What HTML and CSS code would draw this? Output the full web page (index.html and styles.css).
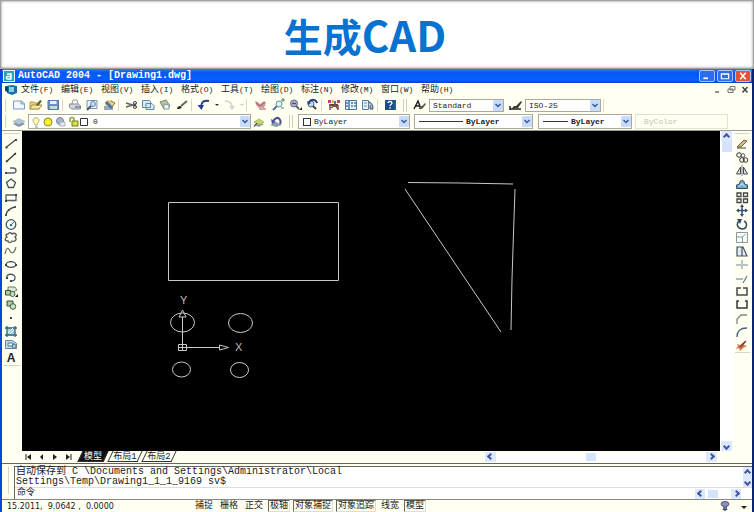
FILE: index.html
```
<!DOCTYPE html>
<html lang="zh-CN">
<head>
<meta charset="utf-8">
<title>生成CAD</title>
<link rel="stylesheet" href="styles.css">
</head>
<body>
<header class="banner"><h1>生成<span class="latin">CAD</span></h1></header>
<main class="window">
  <div class="titlebar">
    <svg class="logo" viewBox="0 0 12 12"><rect width="12" height="12" fill="#e8f6f8"/><rect x="1" y="1" width="10" height="10" fill="#2fa3b5"/><path d="M4 4h4v5H4.500C3 9 3 6.500 4.500 6.500H8" fill="none" stroke="#fff" stroke-width="1.500"/></svg>
    <span class="caption">AutoCAD 2004 - [Drawing1.dwg]</span>
    <button class="wbtn" aria-label="最小化"><svg viewBox="0 0 14 11"><path d="M3 8h5" stroke="#fff" stroke-width="2"/></svg></button>
    <button class="wbtn" aria-label="还原"><svg viewBox="0 0 14 11"><path d="M3 3h8v5.500H3zM3 3.500h8" fill="none" stroke="#fff" stroke-width="1.300"/></svg></button>
    <button class="wbtn close" aria-label="关闭"><svg viewBox="0 0 14 11"><path d="M4 2l6 7M10 2L4 9" stroke="#fff" stroke-width="1.700"/></svg></button>
  </div>

  <nav class="menubar">
    <svg class="docicon" viewBox="0 0 14 12"><path d="M2 2l6-1 5 1v7l-5 2-5-2z" fill="#1b6fa8"/><path d="M5 3h5v5H5z" fill="#7fd0e8"/><path d="M1 2l3 1v5l-3-1z" fill="#163f78"/></svg>
    <button>文件<i>(F)</i></button><button>编辑<i>(E)</i></button><button>视图<i>(V)</i></button><button>插入<i>(I)</i></button><button>格式<i>(O)</i></button><button>工具<i>(T)</i></button><button>绘图<i>(D)</i></button><button>标注<i>(N)</i></button><button>修改<i>(M)</i></button><button>窗口<i>(W)</i></button><button>帮助<i>(H)</i></button>
    <span class="spacer"></span>
    <button class="mdi" aria-label="最小化图形"><svg viewBox="0 0 14 12"><path d="M5 8h4" stroke="#555" stroke-width="1.300"/></svg></button>
    <button class="mdi" aria-label="还原图形"><svg viewBox="0 0 14 12"><path d="M6 2.500h5v3.500H6zM4 5h5v3.500H4z" fill="#fffff2" stroke="#777"/></svg></button>
    <button class="mdi" aria-label="关闭图形"><svg viewBox="0 0 14 12"><path d="M4.500 3l5 5.500M9.500 3l-5 5.500" stroke="#444" stroke-width="1.500"/></svg></button>
  </nav>

  <div class="toolbar">
    <span class="grip"></span>
    <button aria-label="新建"><svg viewBox="0 0 16 14"><path d="M2.500 3h8l3 2.500V11h-11z" fill="#f1f8ff" stroke="#7d9cc4"/><path d="M10 3v3h3.500" fill="#bad5ee" stroke="#7d9cc4"/></svg></button>
    <button aria-label="打开"><svg viewBox="0 0 16 14"><path d="M2 4h4l1 1h4v6H2z" fill="#f0cf6a" stroke="#b59a55"/><path d="M4 7h10l-3 4H2z" fill="#f9e8a0" stroke="#a98f4c"/><path d="M8 7l4-5 2 1-4 5z" fill="#596635"/></svg></button>
    <button aria-label="保存"><svg viewBox="0 0 16 14"><path d="M3 2.500h10.500v9H3z" fill="#6d90c4" stroke="#5377ad"/><path d="M5 3h6.500v3H5z" fill="#e6f1fb"/><path d="M5 8h7v3H5z" fill="#c8d8eb"/></svg></button>
    <span class="sep"></span>
    <button aria-label="打印"><svg viewBox="0 0 16 14"><path d="M5 6l1-4h4l1 4" fill="#fff" stroke="#9a9aa8"/><path d="M2.500 6h9l2 2v3h-9l-2-2z" fill="#d3d4de" stroke="#85879a"/><path d="M8 9h5" stroke="#485378"/></svg></button>
    <button aria-label="打印预览"><svg viewBox="0 0 16 14"><path d="M3 2.500h10v8H3z" fill="#edf5fd" stroke="#7893b5"/><circle cx="9" cy="6" r="2.500" fill="#c4e1f3" stroke="#6b86a9"/><path d="M7 8l-4 4" stroke="#455273" stroke-width="2"/></svg></button>
    <button aria-label="发布"><svg viewBox="0 0 16 14"><circle cx="8" cy="6" r="4" fill="#ecc878"/><path d="M3 8h9v4H3z" fill="#9ba7bb"/><path d="M6 3l6 6-2 2-6-6z" fill="#4973ad"/><path d="M10 3l4 2-3 4" fill="#eed478" stroke="#7e7547"/></svg></button>
    <span class="sep"></span>
    <button aria-label="剪切"><svg viewBox="0 0 16 14"><path d="M3 5l10 3M3 9l10-3" stroke="#666" stroke-width="1.500"/><circle cx="12" cy="5" r="1.500" fill="none" stroke="#444"/><circle cx="12" cy="9" r="1.500" fill="none" stroke="#444"/></svg></button>
    <button aria-label="复制"><svg viewBox="0 0 16 14"><path d="M2.500 2.500h7l1 1v6h-8zM6 5.500h6l2 2v4H6z" fill="#d9ebfb" stroke="#5f86b7"/></svg></button>
    <button aria-label="粘贴"><svg viewBox="0 0 16 14"><path d="M3 4l6-2 4 6-6 3z" fill="#bac5a2" stroke="#7c8872"/><path d="M7 6l5 1v4H7z" fill="#eef6fb" stroke="#8296a3"/></svg></button>
    <button aria-label="特性匹配"><svg viewBox="0 0 16 14"><path d="M3 11c0-3 3-3 3-3l2 1-2 2z" fill="#333"/><path d="M7 8l6-5" stroke="#71624a" stroke-width="2"/></svg></button>
    <span class="sep"></span>
    <button aria-label="放弃"><svg viewBox="0 0 16 14"><path d="M13 3C8 2 5 4 5 9" fill="none" stroke="#243d86" stroke-width="2"/><path d="M1.500 7L8 7l-2.500 5z" fill="#243d86"/></svg></button>
    <button class="narrow" aria-label="放弃列表"><svg viewBox="0 0 8 14"><path d="M2 6h4L4 8z" fill="#333"/></svg></button>
    <button aria-label="重做"><svg viewBox="0 0 16 14"><path d="M4 3c5 0 7 2 7 6" fill="none" stroke="#d0d0d0" stroke-width="1.500"/><path d="M8 8h6l-3 4z" fill="#d4d4d4"/></svg></button>
    <button class="narrow" aria-label="重做列表"><svg viewBox="0 0 8 14"><path d="M2 6h4L4 8z" fill="#ccc"/></svg></button>
    <span class="sep wide"></span>
    <button aria-label="平移"><svg viewBox="0 0 16 14"><path d="M2 3l3 1 2 2 4-3 2 2-2 5H6L3 7z" fill="#d49a98"/><path d="M3 5l4 3 5-4M6 11h7" stroke="#a05665" fill="none"/></svg></button>
    <button aria-label="实时缩放"><svg viewBox="0 0 16 14"><path d="M7 8l-4 4" stroke="#527291" stroke-width="2"/><circle cx="9" cy="6" r="3" fill="#ddf3f0" stroke="#5992a1"/><path d="M11 2h4M13 0v4M11 10h3" stroke="#4d8a52"/></svg></button>
    <button aria-label="窗口缩放"><svg viewBox="0 0 16 14"><circle cx="7" cy="5.500" r="3.500" fill="#a6a9bd" stroke="#676f8b"/><path d="M9 8l3 3" stroke="#596078" stroke-width="2"/><path d="M5 5.500h4" stroke="#44506d"/><path d="M12 12h3v-3z" fill="#222"/></svg></button>
    <button aria-label="缩放上一个"><svg viewBox="0 0 16 14"><circle cx="7" cy="6" r="3" fill="#bdd9f1" stroke="#4b658c"/><path d="M9 8l3 3" stroke="#444" stroke-width="2"/><path d="M13 5C12 1 7 1 5 4" fill="none" stroke="#283c80" stroke-width="2"/><path d="M3 3l1 4 3-2z" fill="#283c80"/></svg></button>
    <span class="sep"></span>
    <button aria-label="特性"><svg viewBox="0 0 16 14"><path d="M2 2h3v3H2zM11 2h3v3h-3z" fill="#c34856"/><path d="M6 2h2v3H6z" fill="#e3b442"/><path d="M8 3h2v3H8z" fill="#4378b8"/><path d="M3 6h9v2H3z" fill="#60433b"/><path d="M4 6v6M12 7v5M5 10l4-3 3 4" stroke="#795448" fill="none" stroke-width="1.500"/></svg></button>
    <button aria-label="设计中心"><svg viewBox="0 0 16 14"><path d="M2.500 2.500h11v9h-11z" fill="#e8f2fa" stroke="#47749f"/><path d="M6 3v8M8 5h2M11 5h2M8 8h2M11 8h2M3 5h2M3 8h2" stroke="#4e7ba4" stroke-width="1.500"/></svg></button>
    <button aria-label="工具选项板"><svg viewBox="0 0 16 14"><path d="M2.500 2.500h6v9h-6z" fill="#e4f0f8" stroke="#547ea4"/><path d="M4 5h3M4 8h3" stroke="#668fae"/><path d="M8 4c3 0 5 2 5 7h-3V7" fill="#9dbbd3" stroke="#3c4d65"/></svg></button>
    <span class="sep"></span>
    <button aria-label="帮助"><svg viewBox="0 0 16 14"><path d="M3 2h11v10H3z" fill="#285f96"/><path d="M3 4l2-2h9l-2 2v8H3z" fill="#1c4e83"/><path d="M6 5c0-2 4-2 4 0 0 1.500-2 1.500-2 3M8 9v1.500" fill="none" stroke="#fff" stroke-width="1.300"/></svg></button>
    <span class="grip double"></span>
    <button aria-label="文字样式"><svg viewBox="0 0 16 14"><path d="M2 11L6 3l3 8M3 8h5" fill="none" stroke="#222" stroke-width="1.500"/><path d="M7 11c0-3 3-3 3-3l3-3 1 1-3 4-2 1z" fill="#5c5544"/></svg></button>
    <select class="combo text-style" aria-label="文字样式"><option>Standard</option></select>
    <button aria-label="标注样式"><svg viewBox="0 0 16 14"><path d="M2 11h11M2 8v4" stroke="#222" stroke-width="1.500"/><path d="M4 11c1-4 4-3 4-3l5-5 1 1-4 6z" fill="#383c2d"/></svg></button>
    <select class="combo dim-style" aria-label="标注样式"><option>ISO-25</option></select>
    <span class="endcap"></span>
  </div>

  <div class="toolbar second">
    <span class="grip"></span>
    <button aria-label="图层"><svg viewBox="0 0 16 14"><path d="M2 9l6-3 6 3-6 3z" fill="#8196b0"/><path d="M2 6.500l6-3 6 3-6 3z" fill="#b6c5d7" stroke="#8ca0b8" stroke-width=".5"/></svg></button>
    <div class="field layer">
      <svg viewBox="0 0 62 12"><path d="M6 9c0-2-2-2-2-5 0-3 6-3 6 0 0 3-2 3-2 5z" fill="#ffffbb" stroke="#b6ae74"/><path d="M6 11h3" stroke="#888"/><circle cx="19" cy="6" r="4" fill="#f6f329" stroke="#8e8a2b"/><circle cx="31" cy="5" r="3.500" fill="#aab4c6" stroke="#7784a0"/><path d="M31 6h5v4h-5z" fill="#e7ebf2" stroke="#a6b0c0"/><path d="M41 6V3c0-2 4-2 4 0v2" fill="none" stroke="#91a130" stroke-width="1.500"/><path d="M43 5h6v5h-6z" fill="#dce044" stroke="#6d7b1f"/><path d="M51.500 2.500h7v7h-7z" fill="#fff" stroke="#333"/></svg>
      <select class="combo" aria-label="当前图层"><option>0</option></select>
    </div>
    <button aria-label="将对象的图层置为当前"><svg viewBox="0 0 16 14"><path d="M2 10l5-3 6 2-5 3z" fill="#95a4b4"/><path d="M3 7l5-3 5 3-4 3z" fill="#c7d865" stroke="#7c903f" stroke-width=".5"/><path d="M3 12l3-4" stroke="#444"/></svg></button>
    <button aria-label="上一个图层"><svg viewBox="0 0 16 14"><path d="M2 10l6-3 6 3-6 2z" fill="#8a9cb2"/><path d="M12 9c2-4-2-8-5-5L5 6" fill="none" stroke="#4c5297" stroke-width="2"/><path d="M3 4l1 5 4-2z" fill="#4c5297"/></svg></button>
    <span class="grip double"></span>
    <div class="field color"><span class="swatch"></span><select class="combo" aria-label="颜色"><option>ByLayer</option></select></div>
    <div class="field linetype"><span class="rule"></span><select class="combo strong" aria-label="线型"><option>ByLayer</option></select></div>
    <div class="field weight"><span class="rule"></span><select class="combo strong" aria-label="线宽"><option>ByLayer</option></select></div>
    <div class="field plot"><select class="combo" disabled aria-label="打印样式"><option>ByColor</option></select></div>
  </div>

  <div class="work">
    <div class="palette draw">
      <span class="hgrip"></span>
      <div class="tools">
        <button aria-label="直线"><svg viewBox="0 0 16 13"><path d="M3 10.500L13 2.500" stroke="#444" stroke-width="1.300"/><path d="M2.500 9.500h2v2h-2zM12 2h2v2h-2z" fill="#446"/></svg></button>
        <button aria-label="构造线"><svg viewBox="0 0 16 13"><path d="M3 11L13 2" stroke="#333" stroke-width="1.300"/><path d="M3 9l2 2H3zM11 2h2v2z" fill="#222"/></svg></button>
        <button aria-label="多段线"><svg viewBox="0 0 16 13"><path d="M3 9h7c4 0 4-5 0-5H7" fill="none" stroke="#555c6c" stroke-width="1.300"/><path d="M2 8h2v2H2z" fill="#446"/></svg></button>
        <button aria-label="正多边形"><svg viewBox="0 0 16 13"><path d="M8 2l4.500 3.500-2 5h-5l-2-5z" fill="none" stroke="#464f5c" stroke-width="1.300"/></svg></button>
        <button aria-label="矩形"><svg viewBox="0 0 16 13"><path d="M3 4h10v5.500H3z" fill="none" stroke="#555f6e" stroke-width="1.300"/><path d="M2 9h2v2H2zM12 3h2v2h-2z" fill="#345"/></svg></button>
        <button aria-label="圆弧"><svg viewBox="0 0 16 13"><path d="M3 11c1-5 4-7 9-8" fill="none" stroke="#444" stroke-width="1.300"/><path d="M2 10h2v2H2zM5 5h2v2H5zM11 2h2v2h-2z" fill="#4b5875"/></svg></button>
        <button aria-label="圆"><svg viewBox="0 0 16 13"><circle cx="8" cy="6.500" r="4.800" fill="none" stroke="#485663" stroke-width="1.300"/><path d="M8 7l3-3" stroke="#2d7dad"/><circle cx="8" cy="7" r="1.300" fill="#2577b0"/></svg></button>
        <button aria-label="修订云线"><svg viewBox="0 0 16 13"><path d="M5 3c2-3 4 0 4 0 3-2 6 1 3 3 3 3-1 5-3 4-2 3-4 1-4 0-4 0-3-3-1-4-2-2-1-3 1-3z" fill="none" stroke="#4d5453" stroke-width="1.300"/></svg></button>
        <button aria-label="样条曲线"><svg viewBox="0 0 16 13"><path d="M2 10C4 1 6 5 7 7s4 4 6-4" fill="none" stroke="#6a7461" stroke-width="1.200"/></svg></button>
        <button aria-label="椭圆"><svg viewBox="0 0 16 13"><ellipse cx="8" cy="6.500" rx="4.800" ry="2.800" fill="none" stroke="#414c62" stroke-width="1.300"/><path d="M2 6h2v2H2zM12 6h2v2h-2zM7 3h2v1H7z" fill="#345"/></svg></button>
        <button aria-label="椭圆弧"><svg viewBox="0 0 16 13"><path d="M4 7C2 2 13 2 12 7c0 2-2 3-4 3" fill="none" stroke="#4b5470" stroke-width="1.300"/><path d="M3 6h2v2H3zM7 9h2v2H7z" fill="#345"/></svg></button>
        <button aria-label="插入块"><svg viewBox="0 0 16 13"><path d="M5 2h7l2 3-4 2H5z" fill="#dbe7d4" stroke="#6c7f6f"/><path d="M2.500 5.500h5V10h-5z" fill="#a9cf9b" stroke="#364f3d"/><circle cx="9.500" cy="9" r="2.500" fill="#c9e0b8" stroke="#45604c"/><path d="M12 12h3V9z" fill="#111"/></svg></button>
        <button aria-label="创建块"><svg viewBox="0 0 16 13"><path d="M4 3h6v5H4z" fill="#a9cfa0" stroke="#374b3f"/><circle cx="10" cy="8.500" r="2.800" fill="#c8dec1" stroke="#4a6151"/></svg></button>
        <button aria-label="点"><svg viewBox="0 0 16 13"><path d="M7 6h2v2H7z" fill="#446"/></svg></button>
        <button aria-label="图案填充"><svg viewBox="0 0 16 13"><path d="M4 2.500h8v8H4z" fill="#9ed1e7"/><path d="M4 1v11M12 1v11M2 3h12M2 10h12" stroke="#35627c" stroke-width="1.300"/><path d="M5 8l5-5M7 9l4-4" stroke="#fff"/></svg></button>
        <button aria-label="面域"><svg viewBox="0 0 16 13"><path d="M2.500 2.500h7l4 3v5h-11z" fill="#bcdcf0" stroke="#6687a0"/><path d="M5 5h5v3H5z" fill="#eef8fb" stroke="#547895"/><circle cx="11" cy="8" r="2" fill="none" stroke="#547895"/></svg></button>
        <button class="letter" aria-label="多行文字">A</button>
      </div>
      <span class="hgrip"></span>
    </div>

    <div class="drawing">
      <svg class="canvas" role="img" aria-label="图形">
        <g fill="none" stroke="#c8c8c8">
          <path d="M146.500 71.500h170v78h-170z"/>
          <path d="M386 51.500l53 .5 52 1M383 58l96 143M493 58l-3 90-1 51"/>
          <ellipse cx="160.500" cy="191.500" rx="12" ry="9.500"/><ellipse cx="218.500" cy="192" rx="12" ry="9.500"/>
          <ellipse cx="159.500" cy="238.500" rx="9" ry="7.500"/><ellipse cx="217.500" cy="239" rx="9" ry="7.500"/>
          <path d="M160.500 216.500V186M160.500 216.500H198M156.500 213.500h8v6h-8zM156.500 216.500h8M160.500 213v7M157 186l3.500-7 3.500 7zM197.500 214l9 2.500-9 2.500z"/>
        </g>
        <g class="axis"><text x="158" y="173">Y</text><text x="213" y="220">X</text></g>
      </svg>
    </div>

    <div class="vscroll">
      <button class="arrow up" aria-label="向上滚动"></button><span class="thumb"></span><span class="spacer"></span><button class="arrow down" aria-label="向下滚动"></button>
    </div>

    <div class="palette modify">
      <span class="hgrip"></span>
      <div class="tools">
        <button aria-label="删除"><svg viewBox="0 0 16 13"><path d="M3 10l7-7 3 1-6 6z" fill="#d6bd78" stroke="#6e6048"/><path d="M3 11h9" stroke="#444"/></svg></button>
        <button aria-label="复制对象"><svg viewBox="0 0 16 13"><circle cx="5" cy="4" r="2.300" fill="none" stroke="#333"/><circle cx="9" cy="4.500" r="1.800" fill="none" stroke="#555"/><circle cx="8" cy="9" r="2.300" fill="none" stroke="#333"/><circle cx="11.500" cy="9" r="2.300" fill="none" stroke="#333"/></svg></button>
        <button aria-label="镜像"><svg viewBox="0 0 16 13"><path d="M6.500 3v7h-4zM9.500 3v7h4z" fill="#dde1e5" stroke="#454b53"/><path d="M8 1v11" stroke="#777"/></svg></button>
        <button aria-label="偏移"><svg viewBox="0 0 16 13"><path d="M2.500 10.500V7l3-1c0-5 5-5 5 0l3 1v3.500z" fill="#72aacb" stroke="#354d67"/><path d="M5 8c1 0 2 0 2-2h2c0 2 1 2 2 2" fill="none" stroke="#d5edf7"/></svg></button>
        <button aria-label="阵列"><svg viewBox="0 0 16 13"><path d="M3 2h4v3.500H3zM9.500 2h4v3.500h-4zM3 8h4v3.500H3zM9.500 8h4v3.500h-4z" fill="#fff" stroke="#444" stroke-width="1.300"/></svg></button>
        <button aria-label="移动"><svg viewBox="0 0 16 13"><path d="M8 2v9M3 6.500h10" stroke="#315078" stroke-width="1.500"/><path d="M8 0l2 3H6zM8 13l2-3H6zM2 6.500l3-2v4zM14 6.500l-3-2v4z" fill="#315078"/></svg></button>
        <button aria-label="旋转"><svg viewBox="0 0 16 13"><path d="M5 3c-4 4 0 8 3 8 5 0 6-6 2-8" fill="none" stroke="#354c68" stroke-width="1.500"/><path d="M3 1h5L6 6z" fill="#354c68"/></svg></button>
        <button aria-label="缩放"><svg viewBox="0 0 16 13"><path d="M2.500 1.500h11v10h-11zM2.500 6h6v5.500M8.500 6l3-3" fill="#f7faf9" stroke="#8a989e"/></svg></button>
        <button aria-label="拉伸"><svg viewBox="0 0 16 13"><path d="M3 2h6l4 9H3zM8 2v9" fill="#e4ebf0" stroke="#455264" stroke-width="1.200"/></svg></button>
        <button aria-label="修剪"><svg viewBox="0 0 16 13"><path d="M2 7h5M9 7h5M8 2v9" stroke="#718b93"/></svg></button>
        <button aria-label="延伸"><svg viewBox="0 0 16 13"><path d="M2 7h7M13 4l-4 7" stroke="#657881" stroke-width="1.200"/></svg></button>
        <button aria-label="打断于点"><svg viewBox="0 0 16 13"><path d="M7 3H3v7h10V3H9" fill="none" stroke="#45484e" stroke-width="1.500"/></svg></button>
        <button aria-label="打断"><svg viewBox="0 0 16 13"><path d="M5 3H3v7h10V3h-2" fill="none" stroke="#34373b" stroke-width="1.500"/></svg></button>
        <button aria-label="倒角"><svg viewBox="0 0 16 13"><path d="M3 12V7l4-4h6" fill="none" stroke="#7a8a84" stroke-width="1.300"/></svg></button>
        <button aria-label="圆角"><svg viewBox="0 0 16 13"><path d="M3 12C3 6 6 3 13 3" fill="none" stroke="#4a6079" stroke-width="1.300"/></svg></button>
        <button aria-label="分解"><svg viewBox="0 0 16 13"><path d="M3 5l3 1 5-4-1 4 3 1-4 2-3 3-1-3-3 1 2-3z" fill="#d47847"/><path d="M6 8l6-6" stroke="#743b2b" stroke-width="1.300"/></svg></button>
      </div>
      <span class="hgrip"></span>
    </div>
  </div>

  <div class="tabs">
    <button class="nav" aria-label="第一个布局"><svg viewBox="0 0 13 10"><path d="M9 2v6L5 5z"/><path d="M4 2v6" stroke="#222"/></svg></button>
    <button class="nav" aria-label="上一个布局"><svg viewBox="0 0 13 10"><path d="M8 2v6L5 5z"/></svg></button>
    <button class="nav" aria-label="下一个布局"><svg viewBox="0 0 13 10"><path d="M5 2v6l4-3z"/></svg></button>
    <button class="nav" aria-label="最后一个布局"><svg viewBox="0 0 13 10"><path d="M5 2v6l4-3z"/><path d="M10 2v6" stroke="#222"/></svg></button>
    <button class="tab active">模型</button><button class="tab">布局1</button><button class="tab">布局2</button>
    <span class="spacer"></span>
    <div class="hscroll"><button class="arrow left" aria-label="向左滚动"></button><span class="thumb"></span><button class="arrow right" aria-label="向右滚动"></button></div>
  </div>

  <section class="command">
    <span class="grip"></span>
    <div class="console">
      <div class="history">
        <p>自动保存到 C \Documents and Settings\Administrator\Local<br>Settings\Temp\Drawing1_1_1_9169 sv$</p>
        <div class="vs"><button class="arrow up" aria-label="上一行"></button><button class="arrow down" aria-label="下一行"></button></div>
      </div>
      <div class="prompt">
        <label for="cmd">命令</label><input id="cmd" type="text">
        <div class="hs"><button class="arrow left" aria-label="向左"></button><span class="thumb"></span><button class="arrow right" aria-label="向右"></button></div>
      </div>
    </div>
  </section>

  <footer class="status">
    <output class="coords">15.2011,  9.0642 ,  0.0000</output>
    <button>捕捉</button><button>栅格</button><button>正交</button><button class="on">极轴</button><button class="on">对象捕捉</button><button class="on">对象追踪</button><button>线宽</button><button class="on">模型</button>
    <span class="spacer"></span>
    <button class="tray" aria-label="通讯中心"><svg viewBox="0 0 16 12"><ellipse cx="8" cy="4" rx="4" ry="2.500" fill="#8d91b5" stroke="#555a83"/><path d="M6 6h4v3H6z" fill="#666d98"/><path d="M5 9h6l-3 2z" fill="#445"/></svg></button>
    <button class="tray" aria-label="状态栏菜单"><svg viewBox="0 0 16 12"><path d="M5 6h6L8 9z" fill="#222"/></svg></button>
  </footer>
</main>
</body>
</html>
```
FILE: styles.css
```
*, ::before { box-sizing: border-box; }
body {
  margin: 0;
  min-height: 100vh;
  display: flex;
  flex-direction: column;
  background: #fffff2;
  color: #222;
  font: 9px "Liberation Mono", "Noto Sans CJK SC", monospace;
}
button, select, input {
  margin: 0;
  padding: 0;
  border: 0;
  border-radius: 0;
  background: none;
  color: inherit;
  font: inherit;
}
svg { display: block; }
.spacer { flex: 1; }

.banner {
  height: 69px;
  flex: none;
  display: flex;
  align-items: center;
  justify-content: center;
  padding: 0 24px 1px 0;
  background: #fff;
  border: 1px solid #a0a0a0;
  box-shadow: inset 0 0 3px #888;
}
h1 {
  margin: 0;
  color: #0872d0;
  font: bold 39px/60px "Noto Sans CJK SC", sans-serif;
}
.latin { font-size: 42px; }

.window {
  flex: 1;
  display: flex;
  flex-direction: column;
  border-left: 2px solid #0c45d8;
  border-right: 2px solid #0a2470;
}
.titlebar {
  height: 14px;
  display: flex;
  align-items: center;
  gap: 1px;
  padding: 0 1px;
  background: linear-gradient(#2f7cf5, #0658f0 25%, #0560ff 80%, #0440c0);
}
.logo { width: 12px; height: 12px; }
.caption {
  flex: 1;
  padding-left: 2px;
  color: #fff;
  font-size: 10px;
  line-height: 14px;
  font-weight: bold;
}
.wbtn {
  width: 16px;
  height: 12px;
  margin-left: 1px;
  border: 1px solid #a9c4fa;
  border-radius: 2px;
  background: #2d6cf0;
}
.wbtn svg { width: 14px; height: 10px; }
.wbtn.close { background: #e2532f; }

.menubar { height: 14px; display: flex; align-items: center; }
.docicon { width: 14px; height: 12px; margin: 0 3px 0 2px; }
.menubar button { width: 40px; text-align: left; white-space: nowrap; line-height: 13px; }
.menubar i { font-style: normal; font-size: 8px; }
.menubar .mdi { width: 14px; }
.mdi svg { width: 14px; height: 12px; }

.toolbar { height: 16px; display: flex; align-items: center; padding-left: 3px; }
.toolbar.second { height: 18px; border-bottom: 1px solid #999; }
.toolbar > button { width: 17px; height: 14px; flex: none; }
.toolbar > button svg { width: 16px; height: 14px; }
.toolbar > .narrow { width: 8px; }
.toolbar > .narrow svg { width: 8px; }
.sep { width: 5px; height: 12px; flex: none; border-left: 1px solid #ddd9c4; }
.sep.wide { width: 7px; }
.grip { width: 6px; height: 13px; flex: none; border-left: 1px solid #d8d5c0; }
.grip.double { width: 9px; margin-left: 4px; border-left: 4px double #d0cdb8; }
.combo {
  height: 13px;
  appearance: none;
  padding-left: 3px;
  font-size: 8px;
  line-height: 11px;
  background:
    url("data:image/svg+xml,%3Csvg xmlns='http://www.w3.org/2000/svg' width='10' height='11'%3E%3Crect width='10' height='11' rx='1' fill='%23c8dcfa'/%3E%3Cpath d='M2.500 4L5 6.500 7.500 4' fill='none' stroke='%23345a94' stroke-width='1.500'/%3E%3C/svg%3E")
    no-repeat right center;
  opacity: 1;
}
.toolbar > .combo { border: 1px solid #aaa99c; background-color: #fff; }
.text-style { flex: 0 1 75px; margin-right: 4px; }
.dim-style { flex: 0 1 76px; }
.endcap { width: 3px; height: 13px; border-right: 1px solid #ddd9c4; }
.field {
  height: 15px;
  display: flex;
  align-items: center;
  border: 1px solid #aaa99c;
  background: #fff;
}
.field .combo { flex: 1; min-width: 0; }
.strong { font-weight: bold; }
.layer { flex: 0 1 223px; }
.layer svg { width: 62px; height: 12px; flex: none; }
.layer .combo { padding-left: 2px; }
.color { flex: 0 1 112px; margin-right: 4px; }
.swatch { width: 8px; height: 8px; margin-left: 4px; border: 1px solid #333; }
.linetype { flex: 0 1 119px; margin-right: 5px; }
.weight { flex: 0 1 94px; margin-right: 3px; }
.rule { width: 44px; height: 1px; margin-left: 4px; background: #333; }
.weight .rule { width: 25px; }
.plot { flex: 0 1 93px; border-color: #e4e1cf; background: #fffff2; color: #c4c2b4; }
.plot .combo { padding-left: 8px; background: none; color: inherit; }

.work { flex: 1; display: flex; min-height: 300px; }
.palette { width: 20px; flex: none; padding-top: 2px; }
.modify { width: 19px; }
.hgrip {
  display: block;
  height: 4px;
  margin: 0 2px;
  border-top: 1px solid #d8d5c0;
}
.tools { height: 228px; display: flex; flex-direction: column; }
.modify .tools { height: 215px; }
.tools button { flex: 1; min-height: 0; width: 16px; margin-left: 1px; }
.tools svg { width: 16px; height: 13px; }
.tools .letter { font: bold 12px/12px "Liberation Sans", sans-serif; }
.drawing { flex: 1; display: flex; background: #000; }
.canvas { flex: 1; width: 100%; height: 100%; }
.axis { fill: #bbb; font: 11px "Liberation Sans", sans-serif; }
.vscroll {
  width: 13px;
  flex: none;
  display: flex;
  flex-direction: column;
  align-items: center;
  background: #fff;
}
.arrow {
  width: 11px;
  height: 10px;
  flex: none;
  display: grid;
  place-items: center;
  background: #dce8fc;
}
.arrow::before {
  content: "";
  width: 5px;
  height: 5px;
  border: solid #44549c;
  border-width: 2px 2px 0 0;
}
.arrow.up::before { transform: rotate(-45deg); }
.arrow.down::before { transform: rotate(135deg); }
.arrow.left::before { transform: rotate(-135deg); }
.arrow.right::before { transform: rotate(45deg); }
.thumb { width: 10px; height: 11px; background: #d3e4fc; }

.tabs { height: 11px; display: flex; align-items: center; padding-left: 20px; }
.nav { width: 13px; }
.nav svg { width: 13px; height: 10px; fill: #222; }
.tab {
  position: relative;
  z-index: 0;
  width: 30px;
  height: 11px;
  margin-left: 4px;
  font-size: 9px;
  line-height: 10px;
  white-space: nowrap;
}
.tab::before {
  content: "";
  position: absolute;
  z-index: -1;
  inset: 0;
  border: solid #333;
  border-width: 0 1px 1px;
  transform: skewX(-25deg);
}
.tab.active { width: 26px; margin-left: 6px; color: #fff; }
.tab.active::before { background: #111; }
.hscroll {
  flex: 0 1 232px;
  height: 10px;
  display: flex;
  align-items: center;
  justify-content: space-between;
  margin-right: 35px;
  background: #fff;
}
.hscroll .thumb { height: 8px; margin-right: 20px; }
.command {
  display: flex;
  margin-top: 1px;
  padding: 2px 0 0 6px;
  border-top: 1px solid #66665f;
}
.command .grip { height: 28px; }
.console { flex: 1; border-top: 1px solid #66665f; border-left: 1px solid #66665f; background: #fff; }
.history { height: 21px; display: flex; border-bottom: 1px solid #ddd; }
.history p { flex: 1; margin: 0; padding-left: 1px; font-size: 10px; line-height: 10px; }
.vs .arrow { height: 10px; width: 9px; }
.prompt { height: 11px; display: flex; align-items: center; line-height: 11px; padding-left: 2px; }
.prompt input { flex: 1; height: 11px; padding-left: 4px; outline: 0; }
.hs { display: flex; align-items: center; gap: 3px; margin-right: 11px; }
.hs .thumb { margin-right: 10px; height: 8px; }
.hs .arrow { width: 10px; }

.status {
  height: 13px;
  display: flex;
  align-items: center;
  gap: 3px;
  border-top: 1px solid #88887e;
  padding-left: 5px;
}
.coords { width: 183px; white-space: pre; font: 8px "DejaVu Sans", sans-serif; }
.status button { padding: 0 1px; height: 12px; line-height: 11px; border: 1px solid transparent; white-space: nowrap; }
.status .on { border-color: #66665f #ddd #ddd #66665f; }
.status .tray { width: 16px; padding: 0; border: 0; }
.tray svg { width: 16px; height: 12px; }
```
